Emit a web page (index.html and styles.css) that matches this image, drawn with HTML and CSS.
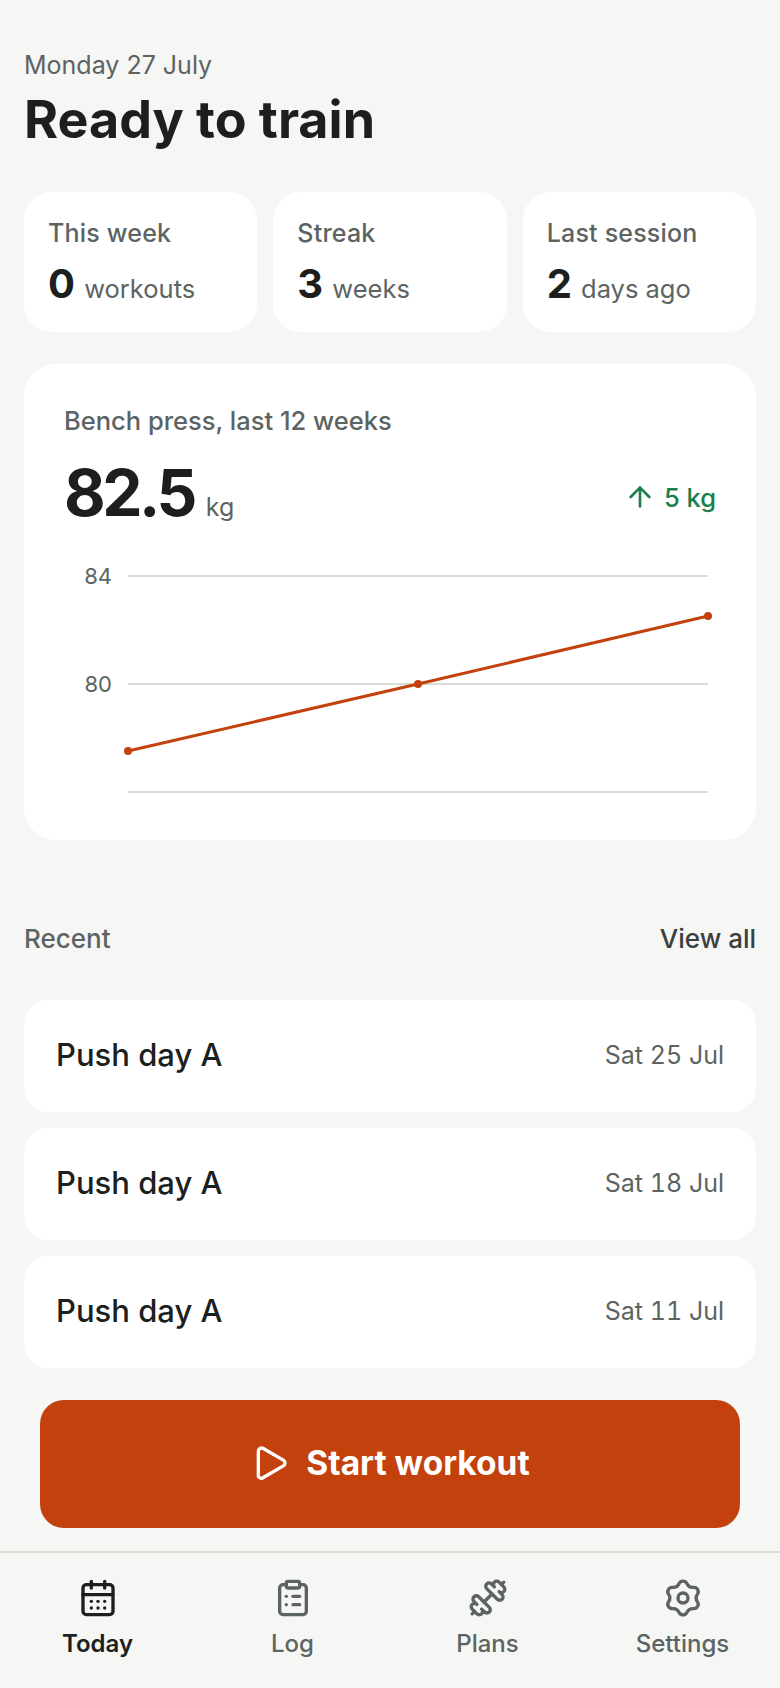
FILE: index.html
```html
<!DOCTYPE html>
<html>
<head>
  <title>Today</title>
  <link rel="stylesheet" href="styles.css">
</head>
<body>
  <div class="app">
    <main class="content">
      <p class="date">Monday 27 July</p>
      <h1>Ready to train</h1>

      <div class="stats">
        <div class="stat">
          <div class="stat-label">This week</div>
          <div class="stat-value"><b>0</b> workouts</div>
        </div>
        <div class="stat">
          <div class="stat-label">Streak</div>
          <div class="stat-value"><b>3</b> weeks</div>
        </div>
        <div class="stat">
          <div class="stat-label">Last session</div>
          <div class="stat-value"><b>2</b> days ago</div>
        </div>
      </div>

      <section class="chart-card">
        <div class="chart-title">Bench press, last 12 weeks</div>
        <div class="chart-head">
          <div class="chart-weight"><b>82.5</b><span>kg</span></div>
          <div class="chart-delta">
            <svg class="icon-arrow" viewBox="0 0 24 24"><path d="m5 12 7-7 7 7"/><path d="M12 19V5"/></svg>
            5 kg
          </div>
        </div>
        <svg class="chart" viewBox="0 0 652 232">
          <line class="grid" x1="64" y1="8" x2="644" y2="8"/>
          <line class="grid" x1="64" y1="116" x2="644" y2="116"/>
          <line class="grid" x1="64" y1="224" x2="644" y2="224"/>
          <text class="tick" x="48" y="16">84</text>
          <text class="tick" x="48" y="124">80</text>
          <polyline class="trend" points="64,183 354,116 644,48"/>
          <circle class="dot" cx="64" cy="183" r="4"/>
          <circle class="dot" cx="354" cy="116" r="4"/>
          <circle class="dot" cx="644" cy="48" r="4"/>
        </svg>
      </section>

      <div class="recent-head">
        <span class="recent-title">Recent</span>
        <a class="view-all">View all</a>
      </div>

      <div class="recent-list">
        <div class="recent-row"><span class="recent-name">Push day A</span><span class="recent-date">Sat 25 Jul</span></div>
        <div class="recent-row"><span class="recent-name">Push day A</span><span class="recent-date">Sat 18 Jul</span></div>
        <div class="recent-row"><span class="recent-name">Push day A</span><span class="recent-date">Sat 11 Jul</span></div>
      </div>

      <button class="start-button">
        <svg class="icon-play" viewBox="0 0 24 24"><path d="M5 5a2 2 0 0 1 3.008-1.728l11.997 6.998a2 2 0 0 1 .003 3.458l-12 7A2 2 0 0 1 5 20z"/></svg>
        Start workout
      </button>
    </main>

    <nav class="tabbar">
      <a class="tab active">
        <svg class="icon" viewBox="0 0 24 24"><path d="M8 2v4"/><path d="M16 2v4"/><rect x="3" y="4" width="18" height="18" rx="2"/><path d="M3 10h18"/><path d="M8 14h.01"/><path d="M12 14h.01"/><path d="M16 14h.01"/><path d="M8 18h.01"/><path d="M12 18h.01"/><path d="M16 18h.01"/></svg>
        Today
      </a>
      <a class="tab">
        <svg class="icon" viewBox="0 0 24 24"><rect x="8" y="2" width="8" height="4" rx="1"/><path d="M16 4h2a2 2 0 0 1 2 2v14a2 2 0 0 1-2 2H6a2 2 0 0 1-2-2V6a2 2 0 0 1 2-2h2"/><path d="M12 11h4"/><path d="M12 16h4"/><path d="M8 11h.01"/><path d="M8 16h.01"/></svg>
        Log
      </a>
      <a class="tab">
        <svg class="icon" viewBox="0 0 24 24"><path d="M17.596 12.768a2 2 0 1 0 2.829-2.829l-1.768-1.767a2 2 0 0 0 2.828-2.829l-2.828-2.828a2 2 0 0 0-2.829 2.828l-1.767-1.768a2 2 0 1 0-2.829 2.829z"/><path d="m2.5 21.5 1.4-1.4"/><path d="m20.1 3.9 1.4-1.4"/><path d="M5.343 21.485a2 2 0 1 0 2.829-2.828l1.767 1.768a2 2 0 1 0 2.829-2.829l-6.364-6.364a2 2 0 1 0-2.829 2.829l1.768 1.767a2 2 0 0 0-2.828 2.829z"/><path d="m9.6 14.4 4.8-4.8"/></svg>
        Plans
      </a>
      <a class="tab">
        <svg class="icon" viewBox="0 0 24 24"><path d="M9.67 3.31A2.6 2.6 0 0 1 14.33 3.31A4 4 0 0 0 18.36 5.64A2.6 2.6 0 0 1 20.69 9.67A4 4 0 0 0 20.69 14.33A2.6 2.6 0 0 1 18.36 18.36A4 4 0 0 0 14.33 20.69A2.6 2.6 0 0 1 9.67 20.69A4 4 0 0 0 5.64 18.36A2.6 2.6 0 0 1 3.31 14.33A4 4 0 0 0 3.31 9.67A2.6 2.6 0 0 1 5.64 5.64A4 4 0 0 0 9.67 3.31z"/><circle cx="12" cy="12" r="3"/></svg>
        Settings
      </a>
    </nav>
  </div>
</body>
</html>
```

FILE: styles.css
```css
* {
  box-sizing: border-box;
}

body {
  margin: 0;
  background-color: #f6f6f4;
  color: #1c1f1e;
  font-family: Inter, "Liberation Sans", sans-serif;
}

.app {
  height: 1688px;
  display: flex;
  flex-direction: column;
}

.content {
  flex: 1;
  padding: 48px 24px 0 24px;
}

.date {
  margin: 0;
  font-size: 25px;
  line-height: 34px;
  color: #5c6462;
}

h1 {
  margin: 6px 0 0 0;
  font-size: 52px;
  line-height: 64px;
  font-weight: 700;
}

.stats {
  display: grid;
  grid-template-columns: 1fr 1fr 1fr;
  gap: 16px;
  margin-top: 40px;
}

.stat {
  height: 140px;
  padding: 24px;
  background-color: #fff;
  border-radius: 28px;
}

.stat-label {
  font-size: 25px;
  line-height: 34px;
  font-weight: 500;
  letter-spacing: 0.2px;
  color: #5c6462;
}

.stat-value {
  margin-top: 9px;
  font-size: 25.5px;
  line-height: 50px;
  color: #5c6462;
}

.stat-value b {
  margin-right: 2px;
  font-size: 40px;
  font-weight: 700;
  color: #1c1f1e;
}

.chart-card {
  height: 476px;
  margin-top: 32px;
  padding: 40px;
  background-color: #fff;
  border-radius: 32px;
}

.chart-title {
  font-size: 25.5px;
  line-height: 34px;
  font-weight: 500;
  color: #5c6462;
}

.chart-head {
  display: flex;
  justify-content: space-between;
  align-items: center;
  margin-top: 17px;
}

.chart-weight {
  display: flex;
  align-items: baseline;
  gap: 12px;
  font-size: 25px;
  line-height: 30px;
  color: #5c6462;
}

.chart-weight b {
  font-size: 64px;
  line-height: 76px;
  font-weight: 700;
  letter-spacing: -3.5px;
  color: #1c1f1e;
}

.chart-delta {
  display: flex;
  align-items: center;
  gap: 8px;
  padding-top: 8px;
  font-size: 25.5px;
  font-weight: 500;
  color: #1a7f4b;
}

.icon-arrow {
  width: 32px;
  height: 32px;
  fill: none;
  stroke: currentColor;
  stroke-width: 2;
  stroke-linecap: round;
  stroke-linejoin: round;
}

.chart {
  display: block;
  width: 652px;
  height: 232px;
  margin-top: 37px;
}

.grid {
  stroke: #dcdcd6;
  stroke-width: 2;
}

.tick {
  font-size: 22px;
  fill: #5c6462;
  text-anchor: end;
}

.trend {
  fill: none;
  stroke: #c2410c;
  stroke-width: 3;
}

.dot {
  fill: #c2410c;
}

.recent-head {
  display: flex;
  justify-content: space-between;
  align-items: center;
  margin-top: 81px;
  line-height: 36px;
  font-size: 26px;
}

.recent-title {
  font-weight: 500;
  color: #5c6462;
}

.view-all {
  font-weight: 500;
  color: #3a403e;
}

.recent-list {
  display: flex;
  flex-direction: column;
  gap: 16px;
  margin-top: 43px;
}

.recent-row {
  display: flex;
  justify-content: space-between;
  align-items: center;
  height: 112px;
  padding: 0 32px 3px 32px;
  background-color: #fff;
  border-radius: 24px;
}

.recent-name {
  font-size: 31px;
  font-weight: 500;
}

.recent-date {
  font-size: 25px;
  font-variant-numeric: tabular-nums;
  color: #5c6462;
}

.start-button {
  display: flex;
  justify-content: center;
  align-items: center;
  gap: 16px;
  width: 700px;
  height: 128px;
  margin: 32px 0 0 16px;
  padding: 0 0 3px 0;
  border: none;
  border-radius: 24px;
  background-color: #c2410c;
  color: #fff;
  font-family: inherit;
  font-size: 33.5px;
  font-weight: 700;
}

.icon-play {
  width: 40px;
  height: 40px;
  fill: none;
  stroke: currentColor;
  stroke-width: 2;
  stroke-linecap: round;
  stroke-linejoin: round;
}

.icon {
  width: 40px;
  height: 40px;
  fill: none;
  stroke: currentColor;
  stroke-width: 2;
  stroke-linecap: round;
  stroke-linejoin: round;
}

.tabbar {
  display: flex;
  height: 137px;
  border-top: 2px solid #dcdcd6;
  padding-top: 25px;
}

.tab {
  flex: 1;
  display: flex;
  flex-direction: column;
  align-items: center;
  gap: 9px;
  font-size: 24px;
  line-height: 34px;
  font-weight: 500;
  color: #5c6462;
}

.tab.active {
  font-weight: 600;
  color: #1c1f1e;
}
```
